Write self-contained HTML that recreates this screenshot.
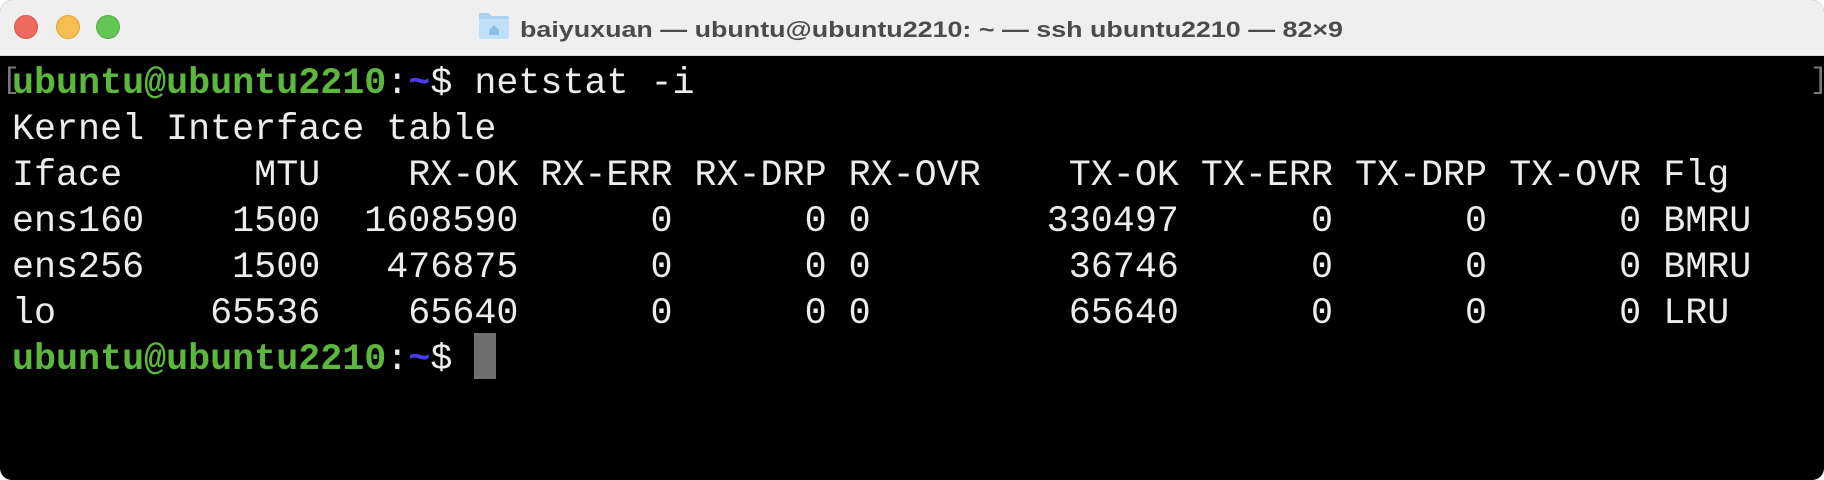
<!DOCTYPE html>
<html><head><meta charset="utf-8"><style>
html,body{margin:0;padding:0;background:#fff;}
.win{position:absolute;left:0;top:0;width:1824px;height:480px;border-radius:12px;overflow:hidden;background:#000;}
.tb{position:absolute;left:0;top:0;width:1824px;height:55px;background:#efefef;border-bottom:1px solid #d8d8d8;}
.dot{position:absolute;top:15px;width:24px;height:24px;border-radius:50%;}
.term{position:absolute;left:12px;top:61px;font-family:"Liberation Mono",monospace;font-size:36.7px;line-height:46px;color:#ececec;white-space:pre;}
.g{color:#5cb83c;font-weight:bold;}
.b{color:#4b3bef;font-weight:bold;}
.cur{display:inline-block;width:22px;height:46px;background:#6e6e6e;vertical-align:top;position:relative;top:-4px;}
.brk{position:absolute;color:#777;font-family:"Liberation Mono",monospace;font-size:30px;}
</style></head><body>
<div class="win">
<div class="tb">
<div class="dot" style="left:14px;background:#ee6a5f;border:1px solid #d65a50;box-sizing:border-box"></div>
<div class="dot" style="left:56px;background:#f6be4f;border:1px solid #dca43e;box-sizing:border-box"></div>
<div class="dot" style="left:96px;background:#62c554;border:1px solid #52ad45;box-sizing:border-box"></div>
<svg style="position:absolute;left:478px;top:12px" width="32" height="28" viewBox="0 0 32 28">
<path d="M1 3 Q1 1 3 1 H11 L14 4 H29 Q31 4 31 6 V25 Q31 27 29 27 H3 Q1 27 1 25 Z" fill="#a9d2f2"/>
<path d="M1 7 H31 V25 Q31 27 29 27 H3 Q1 27 1 25 Z" fill="#bfe0f8"/>
<path d="M11 18 L16 13 L21 18 V23 H11 Z" fill="#8fbde3"/>
</svg>
<svg style="position:absolute;left:518px;top:8px" width="830" height="40">
<text x="2" y="29" font-family="Liberation Sans,sans-serif" font-weight="bold" font-size="22.5" fill="#4b4b4b" textLength="823" lengthAdjust="spacingAndGlyphs">baiyuxuan — ubuntu@ubuntu2210: ~ — ssh ubuntu2210 — 82×9</text>
</svg>
</div>
<div class="brk" style="left:2px;top:64px">[</div>
<div class="brk" style="left:1810px;top:64px">]</div>
<div class="term"><span class="g">ubuntu@ubuntu2210</span>:<span class="b">~</span>$ netstat -i
Kernel Interface table
Iface      MTU    RX-OK RX-ERR RX-DRP RX-OVR    TX-OK TX-ERR TX-DRP TX-OVR Flg
ens160    1500  1608590      0      0 0        330497      0      0      0 BMRU
ens256    1500   476875      0      0 0         36746      0      0      0 BMRU
lo       65536    65640      0      0 0         65640      0      0      0 LRU
<span class="g">ubuntu@ubuntu2210</span>:<span class="b">~</span>$ <span class="cur"></span></div>
</div>
</body></html>
